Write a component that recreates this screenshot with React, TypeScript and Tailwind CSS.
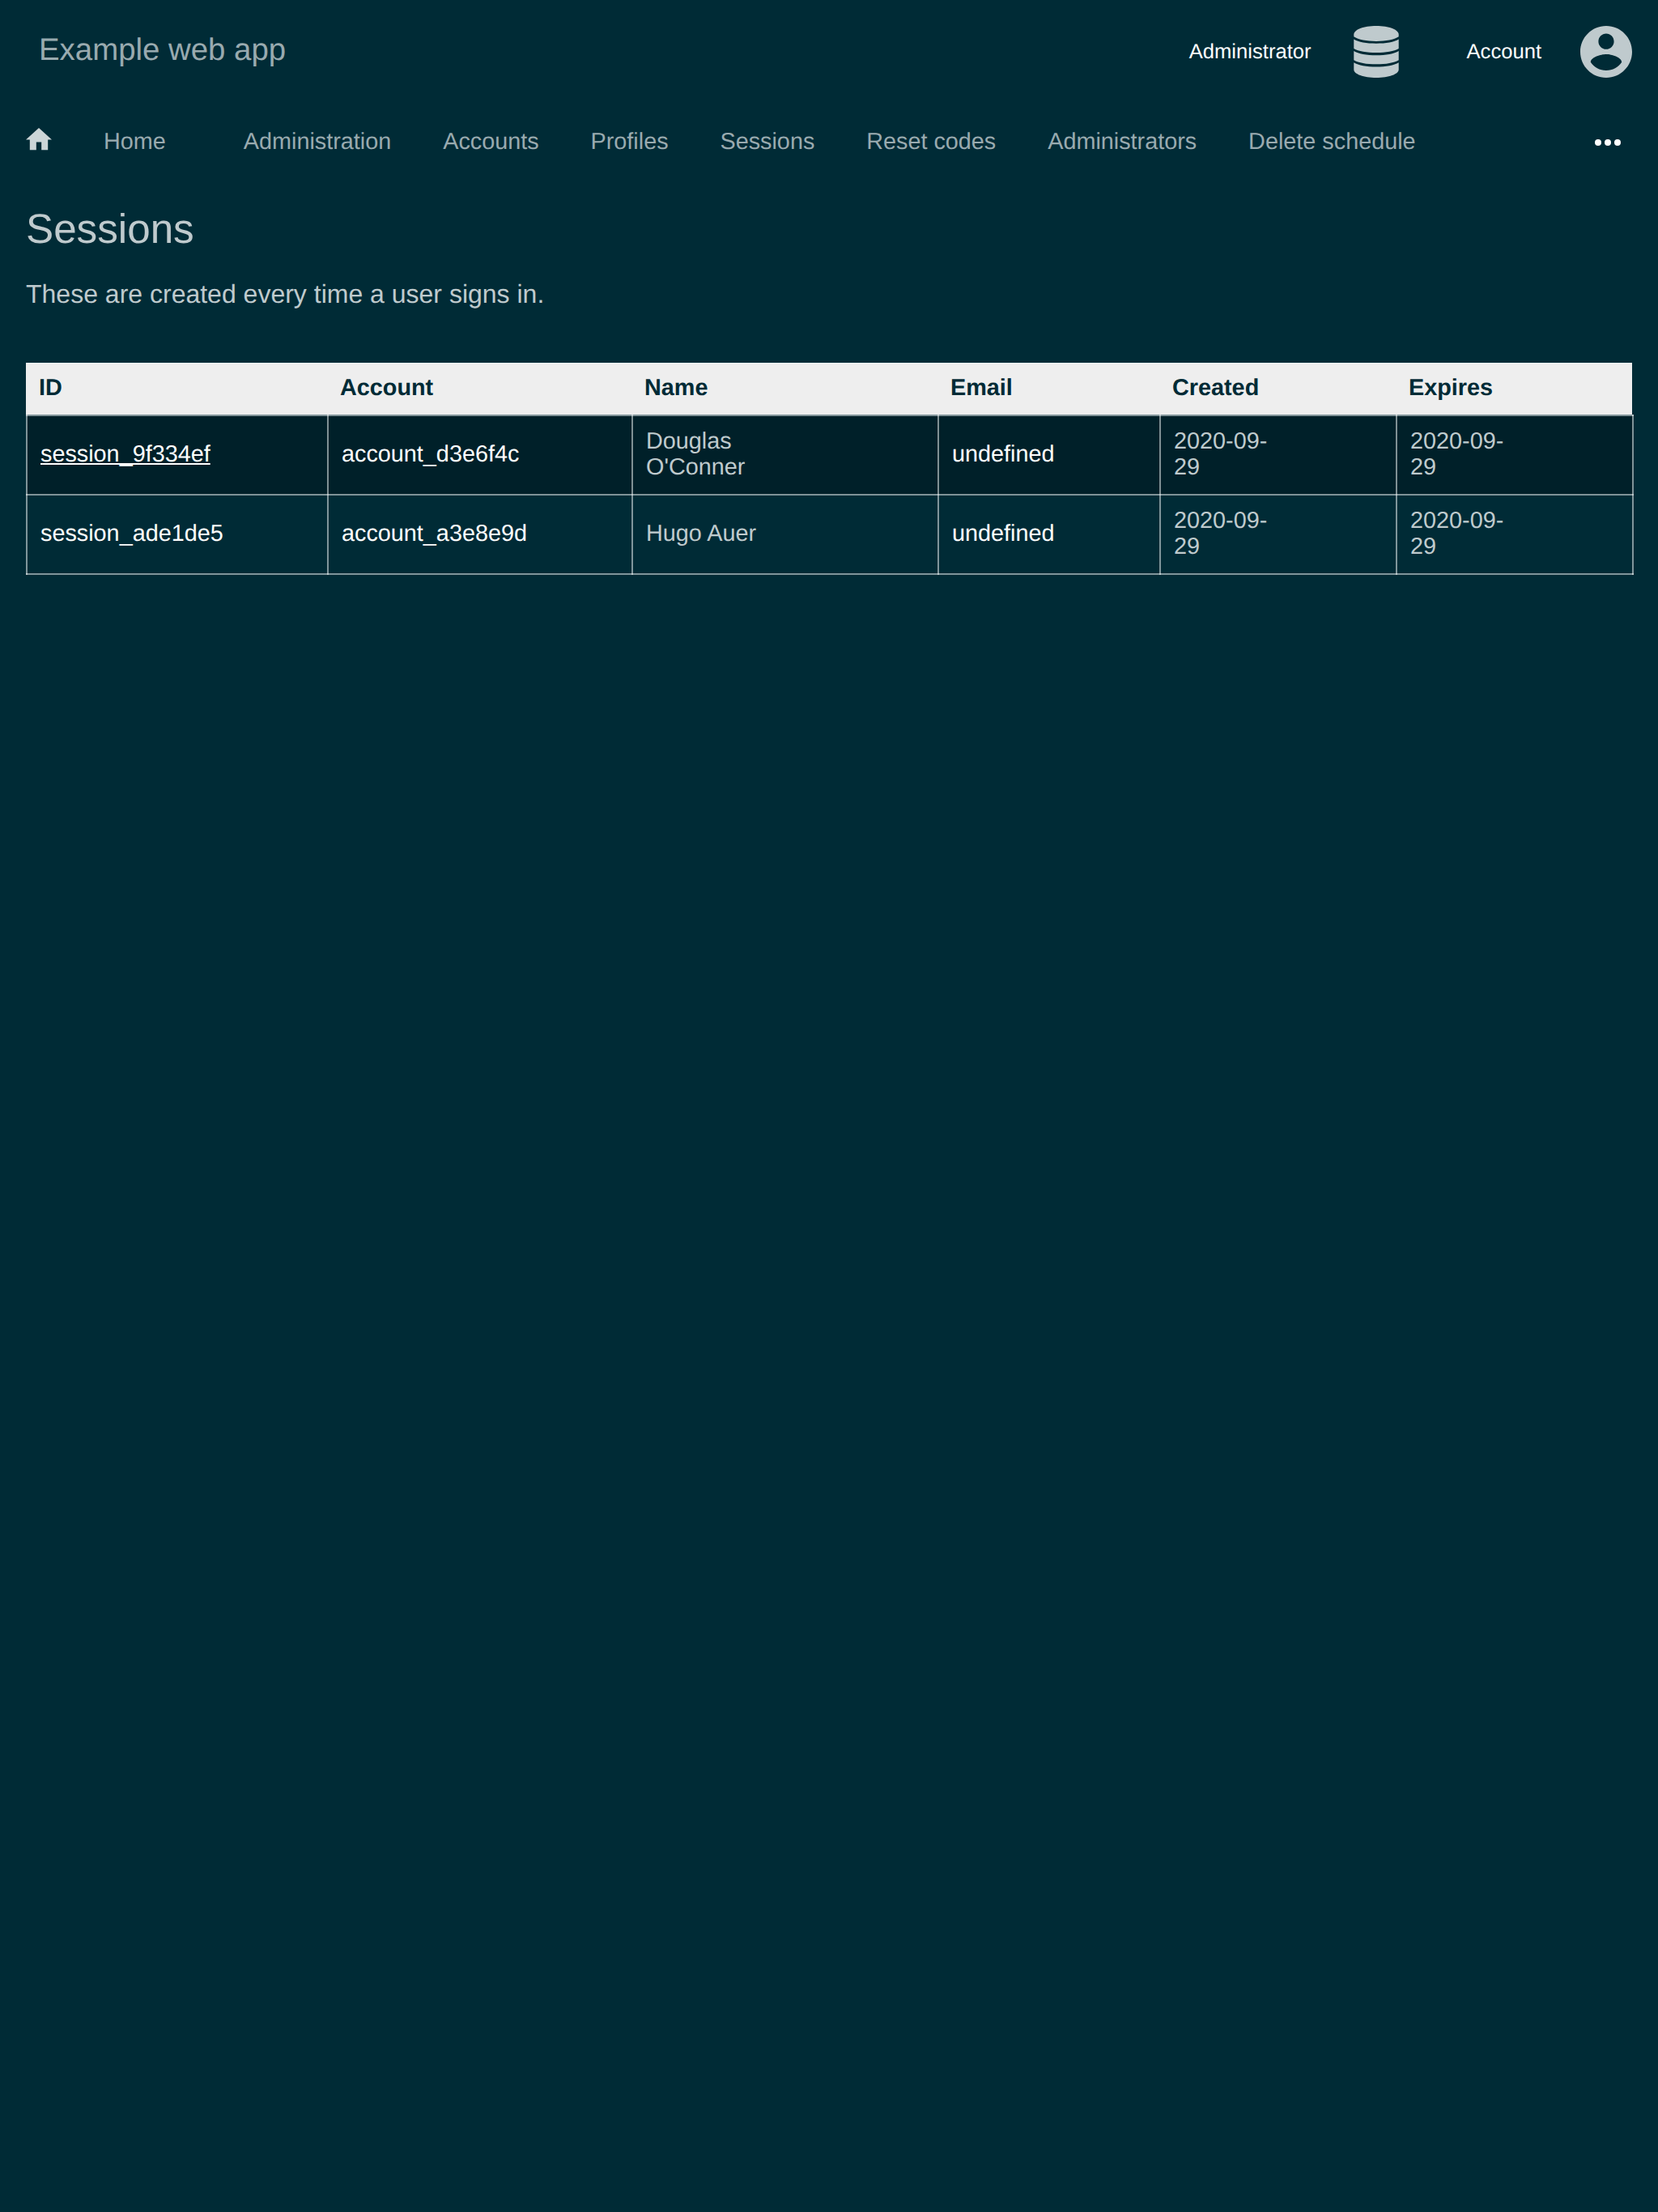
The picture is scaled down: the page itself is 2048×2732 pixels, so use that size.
const NAV = ['Administration', 'Accounts', 'Profiles', 'Sessions', 'Reset codes', 'Administrators', 'Delete schedule'];

const ROWS = [
  { id: 'session_9f334ef', account: 'account_d3e6f4c', name: ['Douglas', "O'Conner"], active: true },
  { id: 'session_ade1de5', account: 'account_a3e8e9d', name: ['Hugo Auer'], active: false },
];

const CELL = 'border-2 border-white/50 pl-4 pt-[14px] pb-4 align-middle font-normal';

function DatabaseIcon() {
  return (
    <svg className="h-16 w-14 fill-[#bfcacd]" viewBox="0 0 56 64">
      <path d="M28 0C43.5 0 55.7 4.6 55.7 10.6V13.2C50 16.8 40 18.9 28 18.9S6 16.8.3 13.2V10.6C.3 4.6 12.500 0 28 0Z" />
      <path d="M.3 16.600C6 20.100 16 21.800 28 21.800S50 20.100 55.700 16.600V28C50 31.300 40 33 28 33S6 31.300.3 28Z" />
      <path d="M.3 30.900C6 34.400 16 36.200 28 36.200S50 34.400 55.700 30.900V42.200C50 45.600 40 47.300 28 47.300S6 45.600.3 42.200Z" />
      <path d="M.3 45.300C6 48.800 16 50.600 28 50.600S50 48.800 55.700 45.300V54C55.700 59.600 43.500 64 28 64S.3 59.600.3 54Z" />
    </svg>
  );
}

function AccountIcon() {
  return (
    <svg className="h-16 w-16 fill-[#bfcacd]" viewBox="2 2 20 20">
      <path d="M12 2C6.480 2 2 6.480 2 12s4.480 10 10 10 10-4.480 10-10S17.520 2 12 2zm0 3c1.660 0 3 1.340 3 3s-1.340 3-3 3-3-1.340-3-3 1.340-3 3-3zm0 14.200c-2.500 0-4.710-1.280-6-3.220.03-1.990 4-3.080 6-3.080 1.990 0 5.970 1.090 6 3.080-1.290 1.940-3.500 3.220-6 3.220z" />
    </svg>
  );
}

function DateText() {
  return (
    <>
      2020-09-
      <br />
      29
    </>
  );
}

export default function App() {
  return (
    <div className="min-h-[2732px] w-[2048px] bg-[#002b36] font-['Liberation_Sans',Arial,sans-serif] text-[#bfcacd] [text-rendering:geometricPrecision]">
      <header className="flex h-32 items-start justify-between pr-8 pl-12">
        <div className="text-[38.4px] leading-[124px] text-[#99aaaf]">Example web app</div>
        <div className="flex text-[25.6px] leading-[128px] text-white">
          <span>Administrator</span>
          <span className="mt-8 ml-[52.5px]"><DatabaseIcon /></span>
          <span className="ml-[83.5px]">Account</span>
          <span className="mt-8 ml-12"><AccountIcon /></span>
        </div>
      </header>

      <nav className="flex h-[94px] items-center pr-[46px] pl-8 text-[28.8px] leading-8 text-[#99aaaf]">
        <svg className="mb-1.5 h-[27.2px] w-8 fill-[#ccd5d7]" viewBox="2 3 20 17">
          <path d="M10 20v-6h4v6h5v-8h3L12 3 2 12h3v8z" />
        </svg>
        <span className="mr-24 ml-16">Home</span>
        <div className="flex gap-[63.9px]">
          {NAV.map((n) => (
            <span key={n}>{n}</span>
          ))}
        </div>
        <svg className="mt-0.5 ml-auto h-2 w-8 fill-white" viewBox="0 0 32 8">
          <circle cx="4" cy="4" r="4" />
          <circle cx="16" cy="4" r="4" />
          <circle cx="28" cy="4" r="4" />
        </svg>
      </nav>

      <main className="px-8">
        <h1 className="mt-[29px] text-[51.2px] leading-[64px]">Sessions</h1>
        <p className="mt-7 text-[32px] leading-10">These are created every time a user signs in.</p>

        <div className="mt-[65px] flex h-16 bg-[#eeeeee] pl-4 text-[28.8px] leading-[62px] font-bold text-[#002b36]">
          <span className="w-[372px]">ID</span>
          <span className="w-[376px]">Account</span>
          <span className="w-[378px]">Name</span>
          <span className="w-[274px]">Email</span>
          <span className="w-[292px]">Created</span>
          <span>Expires</span>
        </div>
        <table className="w-[1986px] table-fixed border-collapse text-[28.8px] leading-8">
          <colgroup>
            <col className="w-[372px]" />
            <col className="w-[376px]" />
            <col className="w-[378px]" />
            <col className="w-[274px]" />
            <col className="w-[292px]" />
            <col className="w-[292px]" />
          </colgroup>
          <tbody>
            {ROWS.map((r) => (
              <tr key={r.id} className={r.active ? 'h-[98px] bg-[#002029]' : 'h-[98px]'}>
                <td className={`${CELL} text-white`}>
                  <span className={r.active ? 'underline [text-decoration-skip-ink:none]' : ''}>{r.id}</span>
                </td>
                <td className={`${CELL} text-white`}>{r.account}</td>
                <td className={CELL}>
                  {r.name.map((part) => (
                    <div key={part}>{part}</div>
                  ))}
                </td>
                <td className={`${CELL} text-white`}>undefined</td>
                <td className={CELL}><DateText /></td>
                <td className={CELL}><DateText /></td>
              </tr>
            ))}
          </tbody>
        </table>
      </main>
    </div>
  );
}
